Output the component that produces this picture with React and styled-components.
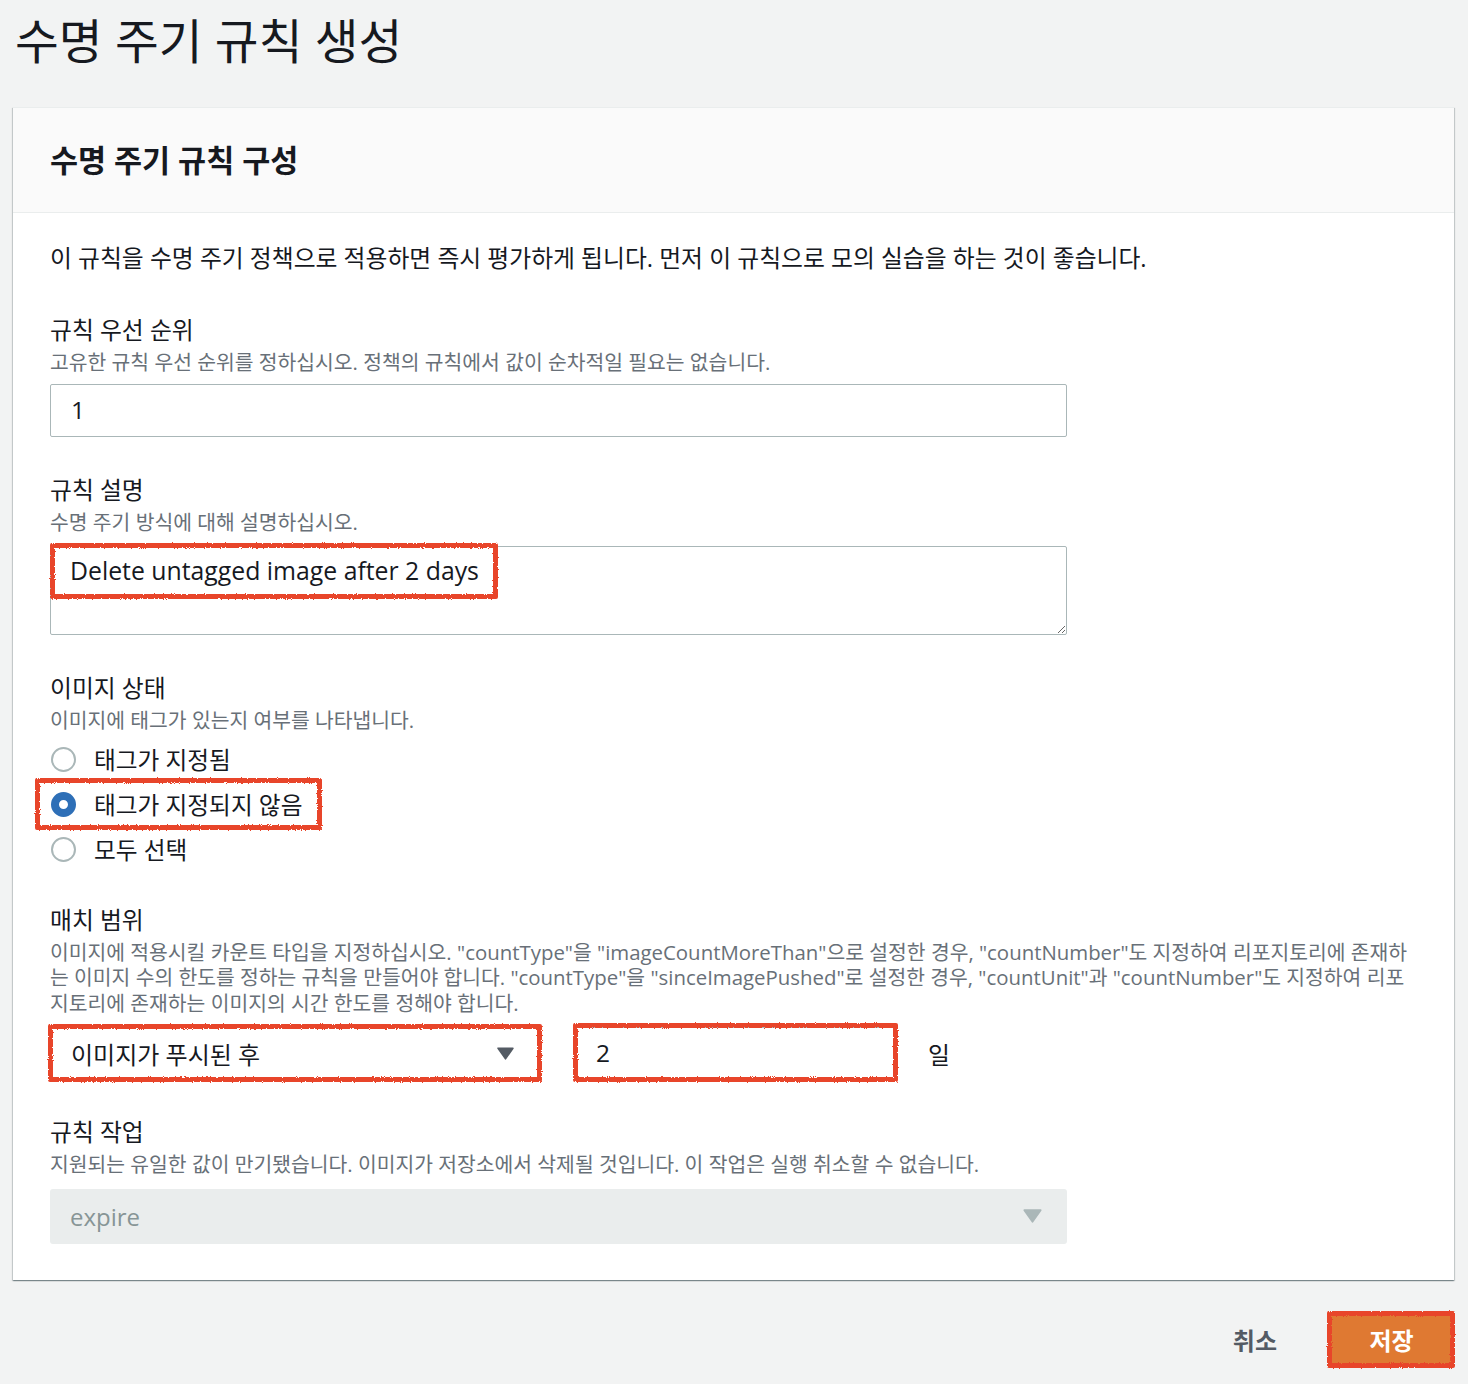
import React from 'react';
import styled, { createGlobalStyle } from 'styled-components';

const GlobalStyle = createGlobalStyle`
  html, body { margin: 0; padding: 0; background: #f2f3f3; }
  body {
    font-family: "Open Sans", "Noto Sans CJK KR", sans-serif;
    color: #16191f;
  }
  * { box-sizing: border-box; }
`;

const Page = styled.div`
  padding: 14px 14px 19px 13px;
  min-height: 1384px;
`;

const Title = styled.h1`
  margin: 0 0 39px 2px;
  font-size: 47.6px;
  font-weight: 400;
  line-height: 54px;
  color: #16191f;
`;

const Card = styled.section`
  background: #fff;
  box-shadow: 0 1px 1px 0 rgba(0, 28, 36, 0.3), 1px 1px 1px 0 rgba(0, 28, 36, 0.15),
    -1px 1px 1px 0 rgba(0, 28, 36, 0.15);
`;

const CardHeader = styled.header`
  height: 106px;
  background: #fafafa;
  border-bottom: 1px solid #eaeded;
  border-top: 1px solid #eaeded;
  display: flex;
  align-items: center;
  padding: 0 37px;
`;

const CardTitle = styled.h2`
  margin: 0;
  font-size: 30.5px;
  font-weight: 700;
  line-height: 36px;
`;

const CardBody = styled.div`
  padding: 30px 36px 36px 37px;
`;

const Intro = styled.p`
  margin: 0;
  font-size: 23.8px;
  line-height: 30px;
`;

const Field = styled.div`
  margin-top: ${(p) => p.$gap}px;
`;

const Label = styled.div`
  font-size: 23.8px;
  line-height: 30px;
  color: #16191f;
`;

const Help = styled.div`
  margin-top: 5px;
  font-size: 20.4px;
  line-height: 25.5px;
  color: #687078;
`;

const HelpLine = styled.span`
  display: block;
  white-space: nowrap;
`;

const Control = styled.div`
  position: relative;
  margin-top: ${(p) => p.$gap}px;
  width: ${(p) => p.$w}px;
`;

const TextInput = styled.input`
  display: block;
  width: 100%;
  height: ${(p) => p.$h || 53}px;
  border: 1px solid #aab7b8;
  border-radius: 2px;
  background: #fff;
  padding: 0 20px 2px;
  font-family: "Open Sans", "Noto Sans CJK KR", sans-serif;
  font-size: 24.5px;
  color: #16191f;
  outline: none;
`;

const TextArea = styled.textarea`
  display: block;
  width: 100%;
  height: 89px;
  border: 1px solid #aab7b8;
  border-radius: 2px;
  padding: 6px 19px;
  font-family: "Open Sans", "Noto Sans CJK KR", sans-serif;
  font-size: 24.8px;
  line-height: 34px;
  color: #16191f;
  outline: none;
  resize: both;
`;

const Annot = styled.div`
  position: absolute;
  pointer-events: none;
  top: ${(p) => p.$t}px;
  left: ${(p) => p.$l}px;
  width: ${(p) => p.$w}px;
  height: ${(p) => p.$h}px;
  border: 5px solid #e8442c;
  border-radius: 2px;
  filter: url(#rough);
`;

const RadioGroup = styled.div`
  margin-top: 3px;
  margin-bottom: -5px;
`;

const RadioRow = styled.label`
  position: relative;
  display: flex;
  align-items: center;
  height: 45px;
  gap: 18px;
  font-size: 23.7px;
  color: #16191f;
`;

const RadioDot = styled.span`
  display: inline-block;
  flex: none;
  width: 25px;
  height: 25px;
  margin-left: 1px;
  border-radius: 50%;
  border: ${(p) => (p.$checked ? '8px solid #2e6fb7' : '2px solid #aab7b8')};
  background: #fff;
`;

const MatchRow = styled.div`
  display: flex;
  align-items: center;
  margin-top: 11px;
`;

const Select = styled.div`
  position: relative;
  display: flex;
  align-items: center;
  justify-content: space-between;
  width: ${(p) => p.$w}px;
  height: ${(p) => p.$h}px;
  padding: 0 25px 0 20px;
  border: ${(p) => (p.$disabled ? 'none' : '1px solid #aab7b8')};
  border-radius: ${(p) => (p.$disabled ? 3 : 2)}px;
  background: ${(p) => (p.$disabled ? '#eaeded' : '#fff')};
  color: ${(p) => (p.$disabled ? '#879596' : '#16191f')};
  font-size: 24px;
`;

const NumberBox = styled.div`
  position: relative;
  margin-left: 35px;
  width: 322px;
`;

const Unit = styled.span`
  margin-left: 31px;
  font-size: 23.8px;
`;

const Footer = styled.div`
  display: flex;
  justify-content: flex-end;
  align-items: center;
  margin-top: 35px;
  padding-right: 1px;
  gap: 33px;
`;

const LinkButton = styled.button`
  border: none;
  background: none;
  padding: 0 20px;
  height: 50px;
  font-family: "Open Sans", "Noto Sans CJK KR", sans-serif;
  font-size: 24px;
  font-weight: 700;
  color: #545b64;
`;

const PrimaryWrap = styled.div`
  position: relative;
`;

const PrimaryButton = styled.button`
  display: block;
  width: 123px;
  height: 50px;
  border: none;
  border-radius: 2px;
  background: #df7932;
  color: #fff;
  font-family: "Open Sans", "Noto Sans CJK KR", sans-serif;
  font-size: 24px;
  font-weight: 700;
`;

const Caret = ({ color, w, h }) => (
  <svg width={w} height={h} viewBox="0 0 16 12" aria-hidden="true">
    <path d="M1 1h14L8 11z" fill={color} stroke={color} strokeWidth="1.5" strokeLinejoin="round" />
  </svg>
);

const RoughFilter = () => (
  <svg width="0" height="0" style={{ position: 'absolute' }} aria-hidden="true">
    <filter id="rough">
      <feTurbulence type="fractalNoise" baseFrequency="0.9" numOctaves="2" result="n" />
      <feDisplacementMap in="SourceGraphic" in2="n" scale="3" />
    </filter>
  </svg>
);

export default function App() {
  return (
    <Page>
      <GlobalStyle />
      <RoughFilter />
      <Title>수명 주기 규칙 생성</Title>
      <Card>
        <CardHeader>
          <CardTitle>수명 주기 규칙 구성</CardTitle>
        </CardHeader>
        <CardBody>
          <Intro>이 규칙을 수명 주기 정책으로 적용하면 즉시 평가하게 됩니다. 먼저 이 규칙으로 모의 실습을 하는 것이 좋습니다.</Intro>

          <Field $gap={42}>
            <Label>규칙 우선 순위</Label>
            <Help>고유한 규칙 우선 순위를 정하십시오. 정책의 규칙에서 값이 순차적일 필요는 없습니다.</Help>
            <Control $gap={8} $w={1017}>
              <TextInput readOnly value="1" />
            </Control>
          </Field>

          <Field $gap={38}>
            <Label>규칙 설명</Label>
            <Help>수명 주기 방식에 대해 설명하십시오.</Help>
            <Control $gap={11} $w={1017}>
              <TextArea readOnly value="Delete untagged image after 2 days" />
              <Annot $t={-3} $l={0} $w={448} $h={56} />
            </Control>
          </Field>

          <Field $gap={38}>
            <Label>이미지 상태</Label>
            <Help>이미지에 태그가 있는지 여부를 나타냅니다.</Help>
            <RadioGroup>
              <RadioRow>
                <RadioDot />
                태그가 지정됨
              </RadioRow>
              <RadioRow>
                <RadioDot $checked />
                태그가 지정되지 않음
                <Annot $t={-4} $l={-15} $w={287} $h={52} />
              </RadioRow>
              <RadioRow>
                <RadioDot />
                모두 선택
              </RadioRow>
            </RadioGroup>
          </Field>

          <Field $gap={38}>
            <Label>매치 범위</Label>
            <Help>
              <HelpLine>이미지에 적용시킬 카운트 타입을 지정하십시오. "countType"을 "imageCountMoreThan"으로 설정한 경우, "countNumber"도 지정하여 리포지토리에 존재하</HelpLine>
              <HelpLine>는 이미지 수의 한도를 정하는 규칙을 만들어야 합니다. "countType"을 "sinceImagePushed"로 설정한 경우, "countUnit"과 "countNumber"도 지정하여 리포</HelpLine>
              <HelpLine>지토리에 존재하는 이미지의 시간 한도를 정해야 합니다.</HelpLine>
            </Help>
            <MatchRow>
              <Select $w={490} $h={52}>
                이미지가 푸시된 후
                <Caret color="#545b64" w={17} h={13} />
                <Annot $t={-4} $l={-3} $w={494} $h={58} />
              </Select>
              <NumberBox>
                <TextInput readOnly value="2" $h={52} />
                <Annot $t={-4} $l={-2} $w={325} $h={59} />
              </NumberBox>
              <Unit>일</Unit>
            </MatchRow>
          </Field>

          <Field $gap={38}>
            <Label>규칙 작업</Label>
            <Help>지원되는 유일한 값이 만기됐습니다. 이미지가 저장소에서 삭제될 것입니다. 이 작업은 실행 취소할 수 없습니다.</Help>
            <Control $gap={11} $w={1017}>
              <Select $w={1017} $h={55} $disabled>
                expire
                <Caret color="#aab7b8" w={19} h={14} />
              </Select>
            </Control>
          </Field>
        </CardBody>
      </Card>
      <Footer>
        <LinkButton>취소</LinkButton>
        <PrimaryWrap>
          <PrimaryButton>저장</PrimaryButton>
          <Annot $t={-4} $l={-3} $w={128} $h={57} />
        </PrimaryWrap>
      </Footer>
    </Page>
  );
}
